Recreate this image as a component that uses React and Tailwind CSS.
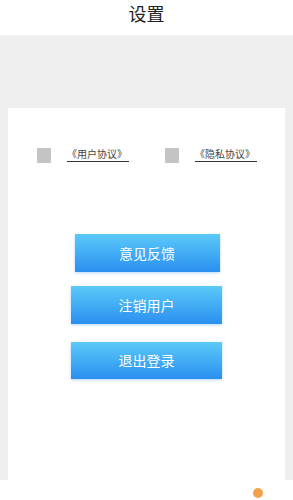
export default function App() {
  const font = { fontFamily: '"Noto Sans CJK SC", "Noto Sans", sans-serif' };
  return (
    <div className="w-[293px] h-[500px] bg-white flex flex-col overflow-hidden" style={font}>
      {/* header */}
      <div className="h-[35px] flex items-center justify-center bg-white">
        <span className="text-[18px] leading-none text-[#222] -mt-[9px]">设置</span>
      </div>

      {/* body */}
      <div className="flex-1 bg-[#efefef] px-[8px] pt-[73px] flex flex-col">
        <div className="flex-1 bg-white flex flex-col">
          {/* agreements */}
          <div className="flex items-center pt-[40px] pl-[29px]">
            <div className="w-[14px] h-[15px] bg-[#c4c4c4]" />
            <span className="ml-[16px] text-[10px] leading-none text-[#444] border-b-[1.5px] border-[#333] pb-[2px] w-[62px]">《用户协议》</span>
            <div className="ml-[36px] w-[14px] h-[15px] bg-[#c4c4c4]" />
            <span className="ml-[16px] text-[10px] leading-none text-[#444] border-b-[1.5px] border-[#333] pb-[2px] w-[62px]">《隐私协议》</span>
          </div>

          {/* buttons */}
          <div className="flex flex-col items-center mt-[71px]">
            <button className="w-[145px] h-[38px] ml-[1px] bg-gradient-to-b from-[#5cc9f8] to-[#2a8ff0] text-white text-[14px] shadow-[0_1px_3px_rgba(40,140,240,0.35)]">
              意见反馈
            </button>
            <button className="mt-[14px] w-[151px] h-[38px] bg-gradient-to-b from-[#5cc9f8] to-[#2a8ff0] text-white text-[14px] shadow-[0_1px_3px_rgba(40,140,240,0.35)]">
              注销用户
            </button>
            <button className="mt-[18px] w-[151px] h-[37px] bg-gradient-to-b from-[#5cc9f8] to-[#2a8ff0] text-white text-[14px] shadow-[0_1px_3px_rgba(40,140,240,0.35)]">
              退出登录
            </button>
          </div>
        </div>
      </div>

      {/* bottom strip */}
      <div className="h-[20px] bg-white flex justify-end pr-[30px] pt-[8px]">
        <div className="w-[10px] h-[10px] rounded-full bg-[#f2a04a]" />
      </div>
    </div>
  );
}
